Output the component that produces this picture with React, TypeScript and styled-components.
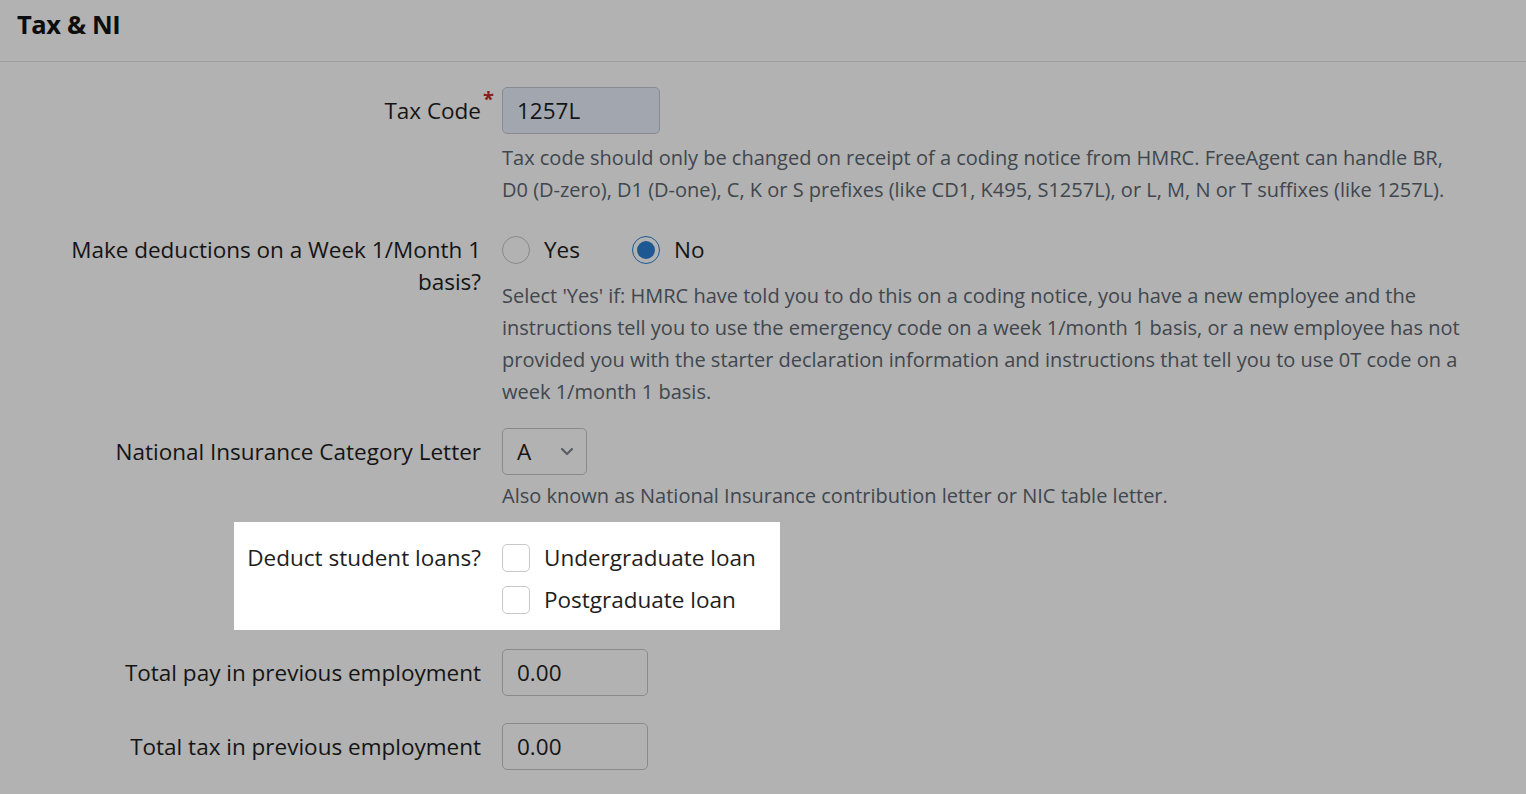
import React from "react";
import styled, { createGlobalStyle } from "styled-components";

const Global = createGlobalStyle`
  html, body { margin: 0; padding: 0; background: #ffffff; }
  body {
    font-family: "Open Sans", "Noto Sans", sans-serif;
    color: #1e1e1e;
    overflow: hidden;
  }
  * { box-sizing: border-box; }
`;

const Page = styled.div`
  width: 1526px;
  min-height: 794px;
`;

const Header = styled.header`
  height: 62px;
  border-bottom: 1px solid #e4e4e4;
  padding: 9px 17px 0;
`;

const Title = styled.h2`
  margin: 0;
  font-size: 25.5px;
  font-weight: 700;
  line-height: 30px;
  color: #141414;
  letter-spacing: -0.4px;
`;

const Form = styled.div`
  padding: 25px 0 0 16px;
  display: flex;
  flex-direction: column;
  align-items: flex-start;
`;

const Row = styled.div<{ $mt: number }>`
  display: grid;
  grid-template-columns: 467px 960px;
  column-gap: 19px;
  margin-top: ${(p) => p.$mt}px;
`;

const Label = styled.label<{ $pt?: number }>`
  position: relative;
  text-align: right;
  font-size: 22.5px;
  line-height: 32px;
  padding-top: ${(p) => (p.$pt ?? 8)}px;
  padding-right: 2px;
  color: #1e1e1e;
`;

const Req = styled.span`
  position: absolute;
  right: -11px;
  top: 2px;
  font-size: 20px;
  line-height: 1;
  color: #c42a2a;
  font-weight: 700;
`;

const Field = styled.div`
  display: flex;
  flex-direction: column;
  align-items: flex-start;
`;

const TextInput = styled.input<{ $w: number; $tinted?: boolean }>`
  width: ${(p) => p.$w}px;
  height: 47px;
  border: 1px solid ${(p) => (p.$tinted ? "#c3c8d3" : "#c6c6c6")};
  border-radius: 5px;
  background: ${(p) => (p.$tinted ? "#e9eefa" : "#ffffff")};
  padding: 0 14px;
  font-family: inherit;
  font-size: 22.5px;
  color: #1e1e1e;
  outline: none;
`;

const Help = styled.p<{ $mt: number }>`
  margin: ${(p) => p.$mt}px 0 0;
  font-size: 20px;
  line-height: 32px;
  color: #5c6670;
`;

const Options = styled.div`
  display: flex;
  align-items: center;
  height: 32px;
`;

const Option = styled.label<{ $mr?: number }>`
  display: flex;
  align-items: center;
  gap: 14px;
  margin-right: ${(p) => p.$mr ?? 0}px;
  font-size: 22.5px;
  line-height: 32px;
  color: #1e1e1e;
`;

const Radio = styled.span<{ $checked?: boolean }>`
  width: 28px;
  height: 28px;
  border-radius: 50%;
  border: 1px solid ${(p) => (p.$checked ? "#2b7fd3" : "#c6c6c6")};
  background: #fff;
  display: flex;
  align-items: center;
  justify-content: center;
  &::after {
    content: "";
    width: 18px;
    height: 18px;
    border-radius: 50%;
    background: ${(p) => (p.$checked ? "#2b7fd3" : "transparent")};
  }
`;

const Select = styled.div`
  width: 85px;
  height: 47px;
  border: 1px solid #c6c6c6;
  border-radius: 5px;
  background: #fff;
  padding: 0 12px 0 14px;
  display: flex;
  align-items: center;
  justify-content: space-between;
  font-size: 22.5px;
  color: #1e1e1e;
`;

const Spotlight = styled.div`
  position: relative;
  z-index: 1;
  margin: 10px 0 0 218px;
  padding: 20px 24px 14px 11px;
  background: #ffffff;
  box-shadow: 0 0 0 300vmax rgba(0, 0, 0, 0.3);
  display: grid;
  grid-template-columns: 238px auto;
  column-gap: 19px;
`;

const Checks = styled.div`
  display: flex;
  flex-direction: column;
  gap: 10px;
`;

const Box = styled.span`
  width: 28px;
  height: 28px;
  border: 1px solid #c8c8c8;
  border-radius: 5px;
  background: #fff;
`;

const Chevron = () => (
  <svg width="14" height="9" viewBox="0 0 14 9" fill="none">
    <path d="M2 2l5 5 5-5" stroke="#7f8790" strokeWidth="2.2" strokeLinecap="round" strokeLinejoin="round" />
  </svg>
);

export default function App() {
  return (
    <Page>
      <Global />
      <Header>
        <Title>Tax &amp; NI</Title>
      </Header>
      <Form>
        <Row $mt={0}>
          <Label>
            Tax Code<Req>*</Req>
          </Label>
          <Field>
            <TextInput $w={158} $tinted readOnly value="1257L" />
            <Help $mt={8}>
              Tax code should only be changed on receipt of a coding notice from HMRC. FreeAgent can handle BR,
              D0 (D-zero), D1 (D-one), C, K or S prefixes (like CD1, K495, S1257L), or L, M, N or T suffixes (like 1257L).
            </Help>
          </Field>
        </Row>

        <Row $mt={28}>
          <Label $pt={0}>Make deductions on a Week 1/Month 1 basis?</Label>
          <Field>
            <Options>
              <Option $mr={52}>
                <Radio />
                Yes
              </Option>
              <Option>
                <Radio $checked />
                No
              </Option>
            </Options>
            <Help $mt={14}>
              Select 'Yes' if: HMRC have told you to do this on a coding notice, you have a new employee and the
              instructions tell you to use the emergency code on a week 1/month 1 basis, or a new employee has not
              provided you with the starter declaration information and instructions that tell you to use 0T code on a
              week 1/month 1 basis.
            </Help>
          </Field>
        </Row>

        <Row $mt={20}>
          <Label>National Insurance Category Letter</Label>
          <Field>
            <Select>
              <span>A</span>
              <Chevron />
            </Select>
            <Help $mt={5}>Also known as National Insurance contribution letter or NIC table letter.</Help>
          </Field>
        </Row>

        <Spotlight>
          <Label $pt={0}>Deduct student loans?</Label>
          <Checks>
            <Option>
              <Box />
              Undergraduate loan
            </Option>
            <Option>
              <Box />
              Postgraduate loan
            </Option>
          </Checks>
        </Spotlight>

        <Row $mt={19}>
          <Label>Total pay in previous employment</Label>
          <Field>
            <TextInput $w={146} readOnly value="0.00" />
          </Field>
        </Row>

        <Row $mt={27}>
          <Label>Total tax in previous employment</Label>
          <Field>
            <TextInput $w={146} readOnly value="0.00" />
          </Field>
        </Row>
      </Form>
    </Page>
  );
}
